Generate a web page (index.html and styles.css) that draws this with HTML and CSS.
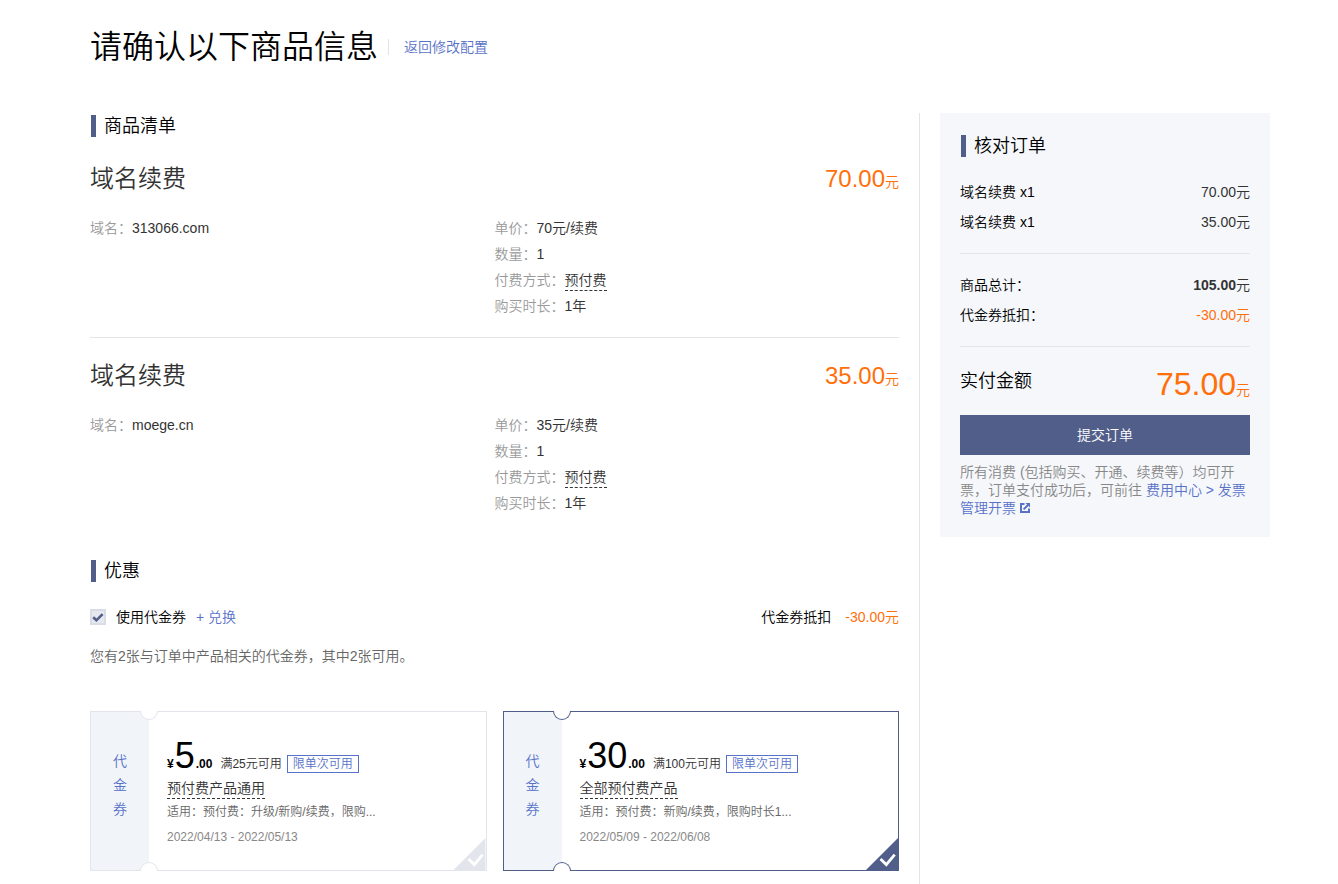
FILE: index.html
```html
<!DOCTYPE html>
<html lang="zh-CN">
<head>
<meta charset="utf-8">
<meta name="viewport" content="width=device-width, initial-scale=1">
<title>请确认以下商品信息</title>
<link rel="stylesheet" href="styles.css">
</head>
<body>
<header class="page-head">
  <h1 class="page-title">请确认以下商品信息</h1>
  <a class="back-link" href="#">返回修改配置</a>
</header>
<div class="layout">
  <main class="main">
    <section>
      <h2 class="section-title">商品清单</h2>
      <article class="item">
        <div class="item-head">
          <h3 class="item-name">域名续费</h3>
          <p class="item-price">70.00<span class="unit">元</span></p>
        </div>
        <div class="item-props">
          <dl class="props">
            <div class="prop"><dt>域名：</dt><dd>313066.com</dd></div>
          </dl>
          <dl class="props">
            <div class="prop"><dt>单价：</dt><dd>70元/续费</dd></div>
            <div class="prop"><dt>数量：</dt><dd>1</dd></div>
            <div class="prop"><dt>付费方式：</dt><dd><span class="dashed">预付费</span></dd></div>
            <div class="prop"><dt>购买时长：</dt><dd>1年</dd></div>
          </dl>
        </div>
      </article>
      <article class="item">
        <div class="item-head">
          <h3 class="item-name">域名续费</h3>
          <p class="item-price">35.00<span class="unit">元</span></p>
        </div>
        <div class="item-props">
          <dl class="props">
            <div class="prop"><dt>域名：</dt><dd>moege.cn</dd></div>
          </dl>
          <dl class="props">
            <div class="prop"><dt>单价：</dt><dd>35元/续费</dd></div>
            <div class="prop"><dt>数量：</dt><dd>1</dd></div>
            <div class="prop"><dt>付费方式：</dt><dd><span class="dashed">预付费</span></dd></div>
            <div class="prop"><dt>购买时长：</dt><dd>1年</dd></div>
          </dl>
        </div>
      </article>
    </section>
    <section class="discount">
      <h2 class="section-title">优惠</h2>
      <div class="voucher-bar">
        <label class="use-voucher">
          <span class="checkbox">
            <input class="checkbox-input" type="checkbox" checked>
            <svg class="checkbox-mark" viewBox="0 0 16 16" aria-hidden="true"><path d="M3.2 8.2l3.2 3.1 6.2-6.2" fill="none" stroke="#515e8a" stroke-width="2.6"/></svg>
          </span>
          使用代金券
        </label>
        <a class="link" href="#">+ 兑换</a>
        <p class="voucher-total">代金券抵扣<span class="orange">-30.00元</span></p>
      </div>
      <p class="voucher-note">您有2张与订单中产品相关的代金券，其中2张可用。</p>
      <div class="coupons">
        <label class="coupon">
          <span class="coupon-stub"><span>代</span><span>金</span><span>券</span></span>
          <span class="notch notch-top"></span>
          <span class="notch notch-bottom"></span>
          <span class="coupon-body">
            <span class="coupon-amount"><b>¥</b><span class="coupon-value">5</span><b>.00</b><span class="coupon-limit">满25元可用</span><span class="tag">限单次可用</span></span>
            <span class="coupon-name"><span class="dashed">预付费产品通用</span></span>
            <span class="coupon-desc">适用：预付费：升级/新购/续费，限购...</span>
            <span class="coupon-date">2022/04/13 - 2022/05/13</span>
          </span>
          <input class="coupon-check" type="checkbox">
          <svg class="coupon-mark" viewBox="0 0 32 32" aria-hidden="true"><path d="M14.5 21l5.8 5.6 8.4-10" fill="none" stroke="#fff" stroke-width="2.8"/></svg>
        </label>
        <label class="coupon coupon-selected">
          <span class="coupon-stub"><span>代</span><span>金</span><span>券</span></span>
          <span class="notch notch-top"></span>
          <span class="notch notch-bottom"></span>
          <span class="coupon-body">
            <span class="coupon-amount"><b>¥</b><span class="coupon-value">30</span><b>.00</b><span class="coupon-limit">满100元可用</span><span class="tag">限单次可用</span></span>
            <span class="coupon-name"><span class="dashed">全部预付费产品</span></span>
            <span class="coupon-desc">适用：预付费：新购/续费，限购时长1...</span>
            <span class="coupon-date">2022/05/09 - 2022/06/08</span>
          </span>
          <input class="coupon-check" type="checkbox" checked>
          <svg class="coupon-mark" viewBox="0 0 32 32" aria-hidden="true"><path d="M14.5 21l5.8 5.6 8.4-10" fill="none" stroke="#fff" stroke-width="2.8"/></svg>
        </label>
      </div>
    </section>
  </main>
  <aside class="summary">
    <h2 class="section-title">核对订单</h2>
    <dl class="lines">
      <div class="line"><dt>域名续费 x1</dt><dd>70.00元</dd></div>
      <div class="line"><dt>域名续费 x1</dt><dd>35.00元</dd></div>
    </dl>
    <dl class="lines lines-ruled">
      <div class="line"><dt>商品总计：</dt><dd><b>105.00</b>元</dd></div>
      <div class="line"><dt>代金券抵扣：</dt><dd class="orange">-30.00元</dd></div>
    </dl>
    <div class="pay">
      <span class="pay-label">实付金额</span>
      <span class="pay-value">75.00<span class="unit">元</span></span>
    </div>
    <button class="submit" type="button">提交订单</button>
    <p class="invoice">所有消费 (包括购买、开通、续费等）均可开票，订单支付成功后，可前往 <a class="link" href="#">费用中心 &gt; 发票管理开票<svg class="external" viewBox="0 0 10 10" aria-hidden="true"><path d="M4.5 1H1v8h8V5.5M3.6 6.4L8 2" fill="none" stroke="currentColor" stroke-width="2"/><path d="M5.4 0H10v4.6z" fill="currentColor"/></svg></a></p>
  </aside>
</div>
</body>
</html>
```

FILE: styles.css
```css
* {
  box-sizing: border-box;
}

body {
  margin: 0;
  min-height: 100vh;
  display: flex;
  flex-direction: column;
  padding: 24px 68px 0 90px;
  background: #fff;
  color: #000;
  font: 350 14px/26px "Liberation Sans", "Noto Sans CJK SC", sans-serif;
}

h1, h2, h3, p, dl, dd {
  margin: 0;
  font-weight: inherit;
}

a {
  color: #5872c9;
  text-decoration: none;
}

b {
  font-weight: 700;
}

.orange {
  color: #ff6f0a;
}

.page-head {
  display: flex;
  align-items: center;
  gap: 10px;
  height: 46px;
  margin-bottom: 43px;
}

.page-title {
  font-size: 32px;
  line-height: 46px;
}

.back-link {
  padding-left: 15px;
  border-left: 1px solid #e3e4e6;
  line-height: 16px;
}

.layout {
  flex: 1;
  display: flex;
  gap: 20px;
}

.main {
  flex: 1;
  min-width: 0;
  padding: 0 20px 12px 0;
  border-right: 1px solid #e3e4e6;
}

.section-title {
  display: flex;
  align-items: center;
  gap: 8px;
  padding-left: 1px;
  font-size: 18px;
  line-height: 26px;
}

.section-title::before {
  content: "";
  width: 5px;
  height: 22px;
  background: #515e8a;
}

.item {
  padding-top: 22px;
}

.item + .item {
  border-top: 1px solid #e3e4e6;
}

.item:first-of-type {
  padding: 24px 0 18px;
}

.item-head {
  display: flex;
  justify-content: space-between;
  align-items: center;
  height: 32px;
  margin-bottom: 20px;
}

.item-name {
  color: #333;
  font-size: 24px;
}

.item-price {
  color: #ff6f0a;
  font-size: 24px;
}

.unit {
  font-size: 14px;
  line-height: 16px;
}

.item-props {
  display: grid;
  grid-template-columns: 1fr 1fr;
}

.prop {
  display: flex;
}

.prop dt {
  color: #999;
}

.prop dd {
  color: #333;
}

.dashed {
  display: inline-block;
  border-bottom: 1px dashed #333;
  line-height: 20px;
}

.discount {
  margin-top: 42px;
}

.voucher-bar {
  display: flex;
  align-items: center;
  gap: 10px;
  margin-top: 20px;
}

.use-voucher {
  display: flex;
  align-items: center;
  gap: 10px;
}

.checkbox {
  position: relative;
  display: flex;
}

.checkbox-input {
  appearance: none;
  width: 16px;
  height: 16px;
  margin: 0;
  border: 2px solid #d8dce6;
  background: #e6e8ee;
}

.checkbox-mark {
  position: absolute;
  inset: 0;
  pointer-events: none;
}

.voucher-total {
  display: flex;
  gap: 14px;
  margin-left: auto;
}

.voucher-note {
  margin-top: 13px;
  color: #666;
}

.coupons {
  display: grid;
  grid-template-columns: 1fr 1fr;
  gap: 16px;
  margin-top: 42px;
}

.coupon {
  --edge: #e3e5ec;
  position: relative;
  display: flex;
  min-height: 160px;
  border: 1px solid var(--edge);
  font-size: 12px;
}

.coupon-selected {
  --edge: #515e8a;
}

.coupon-stub {
  display: flex;
  flex-direction: column;
  align-items: center;
  justify-content: center;
  width: 58px;
  padding-bottom: 12px;
  background: #f1f5fa;
  color: #5872c9;
  font-size: 14px;
  line-height: 24px;
}

.notch {
  position: absolute;
  left: 49px;
  width: 18px;
  height: 9px;
  border: 1px solid var(--edge);
  background: #fff;
}

.notch-top {
  top: -1px;
  border-top: 0;
  border-radius: 0 0 9px 9px;
}

.notch-bottom {
  bottom: -1px;
  border-bottom: 0;
  border-radius: 9px 9px 0 0;
}

.coupon-body {
  flex: 1;
  min-width: 0;
  display: flex;
  flex-direction: column;
  padding: 24px 18px 20px;
}

.coupon-amount {
  display: flex;
  align-items: baseline;
  line-height: 16px;
  white-space: nowrap;
}

.coupon-value {
  margin: 0 1px;
  font-size: 36px;
  line-height: 40px;
}

.coupon-limit {
  margin: 0 5px 0 8px;
  color: #333;
}

.tag {
  padding: 0 5px;
  border: 1px solid #5872c9;
  color: #5872c9;
}

.coupon-name {
  color: #333;
  font-size: 14px;
  line-height: 24px;
}

.coupon-desc {
  color: #666;
  line-height: 24px;
}

.coupon-date {
  color: #888;
}

.coupon-check {
  appearance: none;
  position: absolute;
  right: 0;
  bottom: 0;
  width: 32px;
  height: 32px;
  margin: 0;
  background: var(--edge);
  clip-path: polygon(100% 0, 100% 100%, 0 100%);
}

.coupon-mark {
  position: absolute;
  right: 0;
  bottom: 0;
  width: 32px;
  height: 32px;
  pointer-events: none;
}

.summary {
  align-self: flex-start;
  width: 330px;
  padding: 20px;
  background: #f5f7fb;
}

.lines {
  padding: 16px 0;
}

.section-title + .lines {
  padding-top: 18px;
}

.line {
  display: flex;
  justify-content: space-between;
  line-height: 30px;
}

.line dd:not(.orange) {
  color: #333;
}

.lines-ruled {
  border: solid #e1e6ee;
  border-width: 1px 0;
}

.pay {
  display: flex;
  justify-content: space-between;
  align-items: flex-start;
  padding: 14px 0 8px;
}

.pay-label {
  font-size: 18px;
  line-height: 40px;
}

.pay-value {
  color: #ff6f0a;
  font-size: 32px;
  line-height: 46px;
}

.submit {
  display: block;
  width: 100%;
  height: 40px;
  margin-bottom: 8px;
  border: 0;
  background: #515e8a;
  color: #fff;
  font: inherit;
}

.invoice {
  color: #888;
  line-height: 18px;
}

.external {
  width: 10px;
  height: 10px;
  margin-left: 4px;
}
```
